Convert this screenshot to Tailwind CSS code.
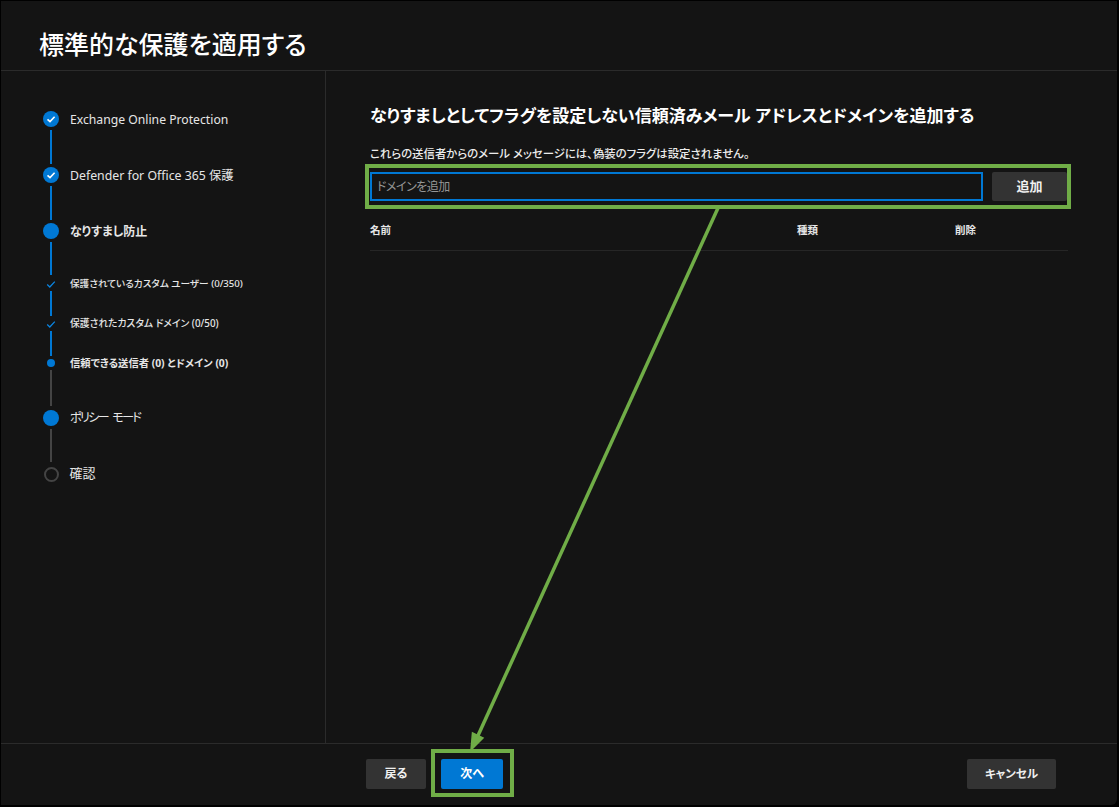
<!doctype html>
<html lang="ja">
<head>
<meta charset="utf-8">
<script src="https://cdn.jsdelivr.net/npm/@tailwindcss/browser@4"></script>
</head>
<body class="m-0 bg-black">
<div class="relative w-[1119px] h-[807px] overflow-hidden bg-black font-['Noto_Sans','Noto_Sans_CJK_JP',sans-serif] text-[#f0f0f0] [font-feature-settings:'palt']">
  <div class="flex flex-col w-[1116px] h-[804px] ml-[1px] mt-[1px] bg-[#141414] rounded-br-[6px]">
    <header class="h-[70px] shrink-0 border-b border-[#2b2b2b] pl-[38px] pt-[26px]">
      <h1 class="text-[25px] leading-[34px] font-medium text-white whitespace-nowrap">標準的な保護を適用する</h1>
    </header>
    <div class="flex flex-1 min-h-0">
      <nav class="w-[325px] shrink-0 border-r border-[#2b2b2b] pl-[42px] pt-[40px]">
        <ol class="flex flex-col text-[#e6e6e6]">
          <li class="flex h-[16px] items-center gap-[11px]">
            <span class="w-[16px] h-[16px] rounded-full bg-[#0078d4] flex items-center justify-center shrink-0"><svg width="10" height="10" viewBox="0 0 10 10" fill="none" stroke="#fff" stroke-width="1.6"><path d="M1.5 5.3 4 7.6 8.6 2.8"/></svg></span>
            <span class="text-[12.2px] leading-[16px] pt-[2px] whitespace-nowrap">Exchange Online Protection</span>
          </li>
          <li class="w-[2px] h-[34px] my-[3px] ml-[7px] bg-[#0078d4]"></li>
          <li class="flex h-[16px] items-center gap-[11px]">
            <span class="w-[16px] h-[16px] rounded-full bg-[#0078d4] flex items-center justify-center shrink-0"><svg width="10" height="10" viewBox="0 0 10 10" fill="none" stroke="#fff" stroke-width="1.6"><path d="M1.5 5.3 4 7.6 8.6 2.8"/></svg></span>
            <span class="text-[12.3px] leading-[16px] pt-[2px] whitespace-nowrap">Defender for Office 365 保護</span>
          </li>
          <li class="w-[2px] h-[34px] my-[3px] ml-[7px] bg-[#0078d4]"></li>
          <li class="flex h-[16px] items-center gap-[11px]">
            <span class="w-[16px] h-[16px] rounded-full bg-[#0078d4] shrink-0"></span>
            <span class="text-[12px] leading-[16px] pt-[2px] font-semibold whitespace-nowrap">なりすまし防止</span>
          </li>
          <li class="w-[2px] h-[33px] mt-[3px] mb-[4px] ml-[7px] bg-[#0078d4]"></li>
          <li class="flex h-[10px] items-center gap-[11px]">
            <span class="w-[16px] flex justify-center shrink-0"><svg width="10" height="9" viewBox="0 0 10 9" fill="none" stroke="#0a84e0" stroke-width="1.3"><path d="M1.2 4.6 3.8 7 8.8 1.6"/></svg></span>
            <span class="text-[9.65px] leading-[16px] pb-[1px] font-medium whitespace-nowrap">保護されているカスタム ユーザー (0/350)</span>
          </li>
          <li class="w-[2px] h-[25px] mt-[2px] mb-[3px] ml-[7px] bg-[#0078d4]"></li>
          <li class="flex h-[10px] items-center gap-[11px]">
            <span class="w-[16px] flex justify-center shrink-0"><svg width="10" height="9" viewBox="0 0 10 9" fill="none" stroke="#0a84e0" stroke-width="1.3"><path d="M1.2 4.6 3.8 7 8.8 1.6"/></svg></span>
            <span class="text-[9.8px] leading-[16px] pb-[1px] font-medium whitespace-nowrap">保護されたカスタム ドメイン (0/50)</span>
          </li>
          <li class="w-[2px] h-[25px] mt-[2px] mb-[3px] ml-[7px] bg-[#0078d4]"></li>
          <li class="flex h-[8px] items-center gap-[11px]">
            <span class="w-[16px] flex justify-center shrink-0"><span class="w-[8px] h-[8px] rounded-full bg-[#0078d4]"></span></span>
            <span class="text-[10.3px] leading-[16px] font-bold whitespace-nowrap">信頼できる送信者 (0) とドメイン (0)</span>
          </li>
          <li class="w-[2px] h-[36px] mt-[3px] mb-[4px] ml-[7px] bg-[#444]"></li>
          <li class="flex h-[16px] items-center gap-[11px]">
            <span class="w-[16px] h-[16px] rounded-full bg-[#0078d4] shrink-0"></span>
            <span class="text-[12.2px] leading-[16px] tracking-[-1.8px] [word-spacing:3px] whitespace-nowrap">ポリシー モード</span>
          </li>
          <li class="w-[2px] h-[33px] mt-[3px] mb-[4px] ml-[7px] bg-[#444]"></li>
          <li class="flex h-[16px] items-center gap-[11px]">
            <span class="w-[15px] h-[15px] ml-[.5px] rounded-full border-2 border-[#444] shrink-0"></span>
            <span class="text-[13px] leading-[16px] pb-[2px] whitespace-nowrap">確認</span>
          </li>
        </ol>
      </nav>
      <main class="flex-1 min-w-0 pl-[44px] pr-[49px] pt-[32px]">
        <h2 class="text-[17.05px] leading-[26px] font-semibold text-white whitespace-nowrap">なりすましとしてフラグを設定しない信頼済みメール アドレスとドメインを追加する</h2>
        <p class="mt-[16px] text-[11.4px] leading-[18px] font-medium text-[#ececec] whitespace-nowrap">これらの送信者からのメール メッセージには、偽装のフラグは設定されません。</p>
        <div class="flex gap-[9px] mt-[9px]">
          <input type="text" placeholder="ドメインを追加" class="w-[613px] h-[29px] border-2 border-[#0078d4] bg-[#141414] px-[5px] text-[12px] tracking-[-0.5px] outline-none placeholder:text-[#969696]">
          <button class="w-[75px] h-[29px] rounded-[2px] bg-[#333] text-[13px] font-semibold text-[#f0f0f0]">追加</button>
        </div>
        <div class="grid grid-cols-[427px_158px_1fr] h-[40px] mt-[10px] items-center border-b border-[#262626] text-[10.5px] font-bold text-[#e6e6e6]">
          <span>名前</span><span>種類</span><span>削除</span>
        </div>
      </main>
    </div>
    <footer class="h-[62px] shrink-0 border-t border-[#2b2b2b] relative flex items-start pt-[15px] pl-[365px] pr-[61px]">
      <button class="w-[60px] h-[30px] rounded-[2px] bg-[#333] text-[12px] font-semibold text-[#f0f0f0]">戻る</button>
      <button class="w-[62px] h-[30px] ml-[15px] rounded-[2px] bg-[#0078d4] text-[12px] font-semibold text-white">次へ</button>
      <button class="w-[89px] h-[30px] ml-auto rounded-[2px] bg-[#333] text-[11.5px] font-semibold text-[#f0f0f0]">キャンセル</button>
    </footer>
  </div>

  <!-- annotations lying over the dialog -->
  <div class="absolute left-[365px] top-[164px] w-[706px] h-[45px] border-[4px] border-[#70ad47]"></div>
  <div class="absolute left-[431px] top-[749px] w-[83px] h-[48px] border-[4px] border-[#70ad47]"></div>
  <svg class="absolute left-0 top-0 pointer-events-none" width="1119" height="807" viewBox="0 0 1119 807" fill="none">
    <path d="M718 208 476 740" stroke="#70ad47" stroke-width="3.5"/>
    <path d="M471 750 472.5 733 483 738Z" fill="#70ad47" stroke="#70ad47" stroke-width="1.5"/>
  </svg>
</div>
</body>
</html>
